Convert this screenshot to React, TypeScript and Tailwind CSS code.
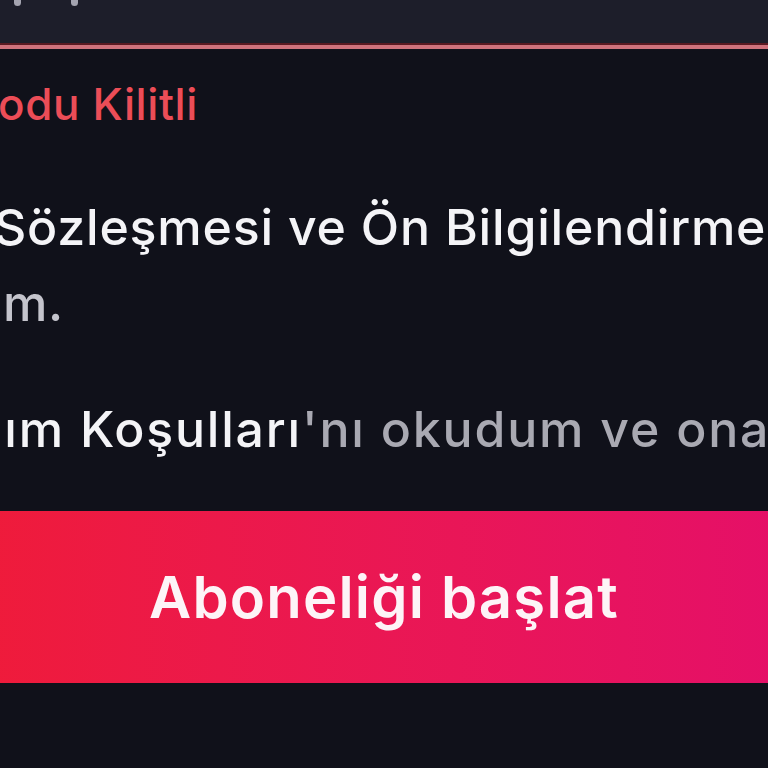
export default function App() {
  return (
    <div
      className="w-[768px] h-[768px] overflow-hidden bg-[#10111a] text-white"
      style={{ fontFamily: 'Inter, "Liberation Sans", sans-serif' }}
    >
      {/* input bottom edge */}
      <div className="h-[43px] bg-[#1d1e2a] flex items-start gap-[50px] pl-[14px]">
        <span className="w-[7px] h-[6px] rounded-b-full bg-[#a4a4b0]" />
        <span className="w-[7px] h-[6px] rounded-b-full bg-[#a4a4b0]" />
      </div>
      <div className="h-[2px] bg-[#5a1a22]" />
      <div className="h-[4px] bg-[#cf727c]" />

      <div className="pt-[25px] whitespace-nowrap">
        <p className="text-[44px] leading-[60px] font-medium tracking-[0.6px] text-[#ec4d57] ml-[-31px]">Kodu Kilitli</p>

        <p className="mt-[55px] text-[50px] leading-[76px] font-medium tracking-[0.8px] text-[#b4b4be] ml-[-6px]">
          <span className="text-[#f4f4f7]">Sözleşmesi ve Ön Bilgilendirme Formu</span>'nu okudum ve
        </p>
        <p className="text-[50px] leading-[76px] font-medium tracking-[0.8px] text-[#c4c4cc] ml-[-28px]">um.</p>

        <p className="mt-[50px] text-[50px] leading-[76px] font-medium tracking-[1.8px] text-[#a9a9b2] ml-[-153px]">
          <span className="text-[#f4f4f7]">Kullanım Koşulları</span>'nı okudum ve onaylıyorum.
        </p>
      </div>

      <div className="mt-[44px] -mx-[20px]">
        <button className="w-full h-[172px] flex items-center justify-center bg-gradient-to-r from-[#ef1b3a] to-[#e50f68] text-[58px] font-semibold tracking-[1.2px] text-[#fdf4f7]">
          Aboneliği başlat
        </button>
      </div>
    </div>
  );
}
